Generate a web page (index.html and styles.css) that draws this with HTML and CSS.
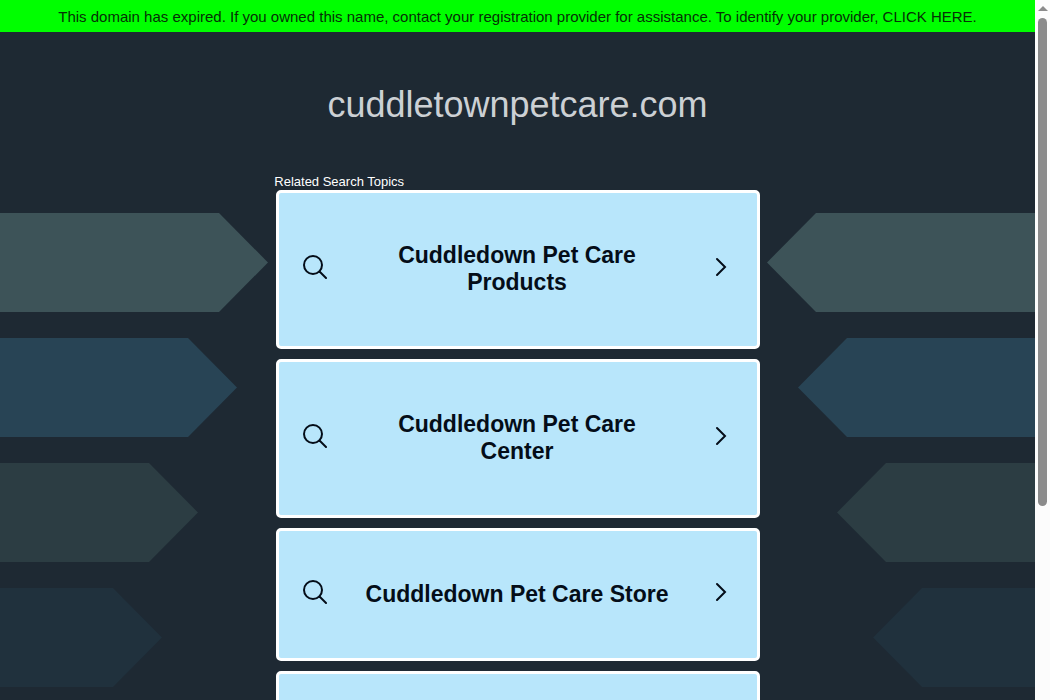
FILE: index.html
```html
<!DOCTYPE html>
<html lang="en">
<head>
<meta charset="utf-8">
<title>cuddletownpetcare.com</title>
<link rel="stylesheet" href="styles.css">
</head>
<body>
<div class="viewport">
  <div class="page">
    <div class="arrows arrows-left" aria-hidden="true">
      <div class="arrow arrow-1"></div>
      <div class="arrow arrow-2"></div>
      <div class="arrow arrow-3"></div>
      <div class="arrow arrow-4"></div>
    </div>
    <div class="arrows arrows-right" aria-hidden="true">
      <div class="arrow arrow-1"></div>
      <div class="arrow arrow-2"></div>
      <div class="arrow arrow-3"></div>
      <div class="arrow arrow-4"></div>
    </div>
    <a class="banner" href="#">This domain has expired. If you owned this name, contact your registration provider for assistance. To identify your provider, CLICK HERE.</a>
    <h1 class="domain">cuddletownpetcare.com</h1>
    <main class="topics">
      <p class="topics-label">Related Search Topics</p>
      <div class="cards">
        <a class="card" href="#">
          <svg class="search" viewBox="0 0 24 24"><circle cx="10" cy="10" r="9"/><path d="M16.5 16.5 23 23"/></svg>
          <span class="card-text">Cuddledown Pet Care Products</span>
          <svg class="chevron" viewBox="0 0 12 20"><path d="M2 2 10 10 2 18"/></svg>
        </a>
        <a class="card" href="#">
          <svg class="search" viewBox="0 0 24 24"><circle cx="10" cy="10" r="9"/><path d="M16.5 16.5 23 23"/></svg>
          <span class="card-text">Cuddledown Pet Care Center</span>
          <svg class="chevron" viewBox="0 0 12 20"><path d="M2 2 10 10 2 18"/></svg>
        </a>
        <a class="card" href="#">
          <svg class="search" viewBox="0 0 24 24"><circle cx="10" cy="10" r="9"/><path d="M16.5 16.5 23 23"/></svg>
          <span class="card-text">Cuddledown Pet Care Store</span>
          <svg class="chevron" viewBox="0 0 12 20"><path d="M2 2 10 10 2 18"/></svg>
        </a>
        <div class="card"></div>
      </div>
    </main>
  </div>
  <div class="scrollbar" aria-hidden="true">
    <svg class="scroll-up" viewBox="0 0 10 5"><path d="M5 0 10 5H0z"/></svg>
    <div class="thumb"></div>
  </div>
</div>
</body>
</html>
```
FILE: styles.css
```css
* {
  box-sizing: border-box;
}

body {
  margin: 0;
  font-family: "Liberation Sans", Arial, sans-serif;
  background: #1e2933;
}

.viewport {
  display: flex;
  height: 100vh;
  overflow: hidden;
}

.page {
  position: relative;
  flex: 1;
  overflow: hidden;
}

.banner {
  display: block;
  padding: 8px 0 6px;
  background: #00ff00;
  color: #063006;
  font-size: 15px;
  line-height: 18px;
  text-align: center;
  text-decoration: none;
}

.domain {
  margin: 52px 0 48px;
  color: #ccd0d4;
  font-size: 36px;
  font-weight: 400;
  line-height: 42px;
  text-align: center;
}

.topics {
  position: relative;
  width: 47%;
  margin: 0 auto;
}

.topics-label {
  margin: 0;
  color: #fff;
  font-size: 13px;
  line-height: 16px;
}

.cards {
  display: flex;
  flex-direction: column;
  gap: 10px;
  padding: 0 1px 0 2px;
}

.card {
  display: flex;
  align-items: center;
  padding: 49px 30px 50px 24px;
  border: 3px solid #fff;
  border-radius: 5px;
  background: #b8e6fb;
  color: #040d18;
  font-size: 23px;
  font-weight: 700;
  line-height: 27px;
  text-align: center;
  text-decoration: none;
}

.card-text {
  flex: 1;
  padding: 0 40px 0 32px;
}

.search,
.chevron {
  flex: none;
  margin-bottom: 4px;
  fill: none;
  stroke: #040d18;
  stroke-width: 2;
  stroke-linecap: round;
}

.search {
  width: 24px;
  height: 24px;
}

.chevron {
  width: 12px;
  height: 20px;
}

.arrows {
  position: absolute;
  top: 213px;
  display: flex;
  flex-direction: column;
  gap: 26px;
  width: 268px;
}

.arrows-left {
  left: 0;
}

.arrows-right {
  right: 0;
  transform: scaleX(-1);
}

.arrow {
  height: 99px;
  clip-path: polygon(0 0, calc(100% - 49px) 0, 100% 50%, calc(100% - 49px) 100%, 0 100%);
}

.arrow-1 {
  width: 268px;
  background: #3d5358;
}

.arrow-2 {
  width: 237px;
  background: #284455;
}

.arrow-3 {
  width: 198px;
  background: #2c3d43;
}

.arrow-4 {
  width: 162px;
  background: #20313d;
}

.scrollbar {
  display: flex;
  flex: none;
  flex-direction: column;
  align-items: center;
  gap: 7px;
  width: 15px;
  padding-top: 6px;
  background: #fcfcfc;
}

.scroll-up {
  flex: none;
  width: 10px;
  height: 5px;
  fill: #8b8b8b;
}

.thumb {
  width: 9px;
  height: 70.3%;
  border-radius: 5px;
  background: #8b8b8b;
}
```
